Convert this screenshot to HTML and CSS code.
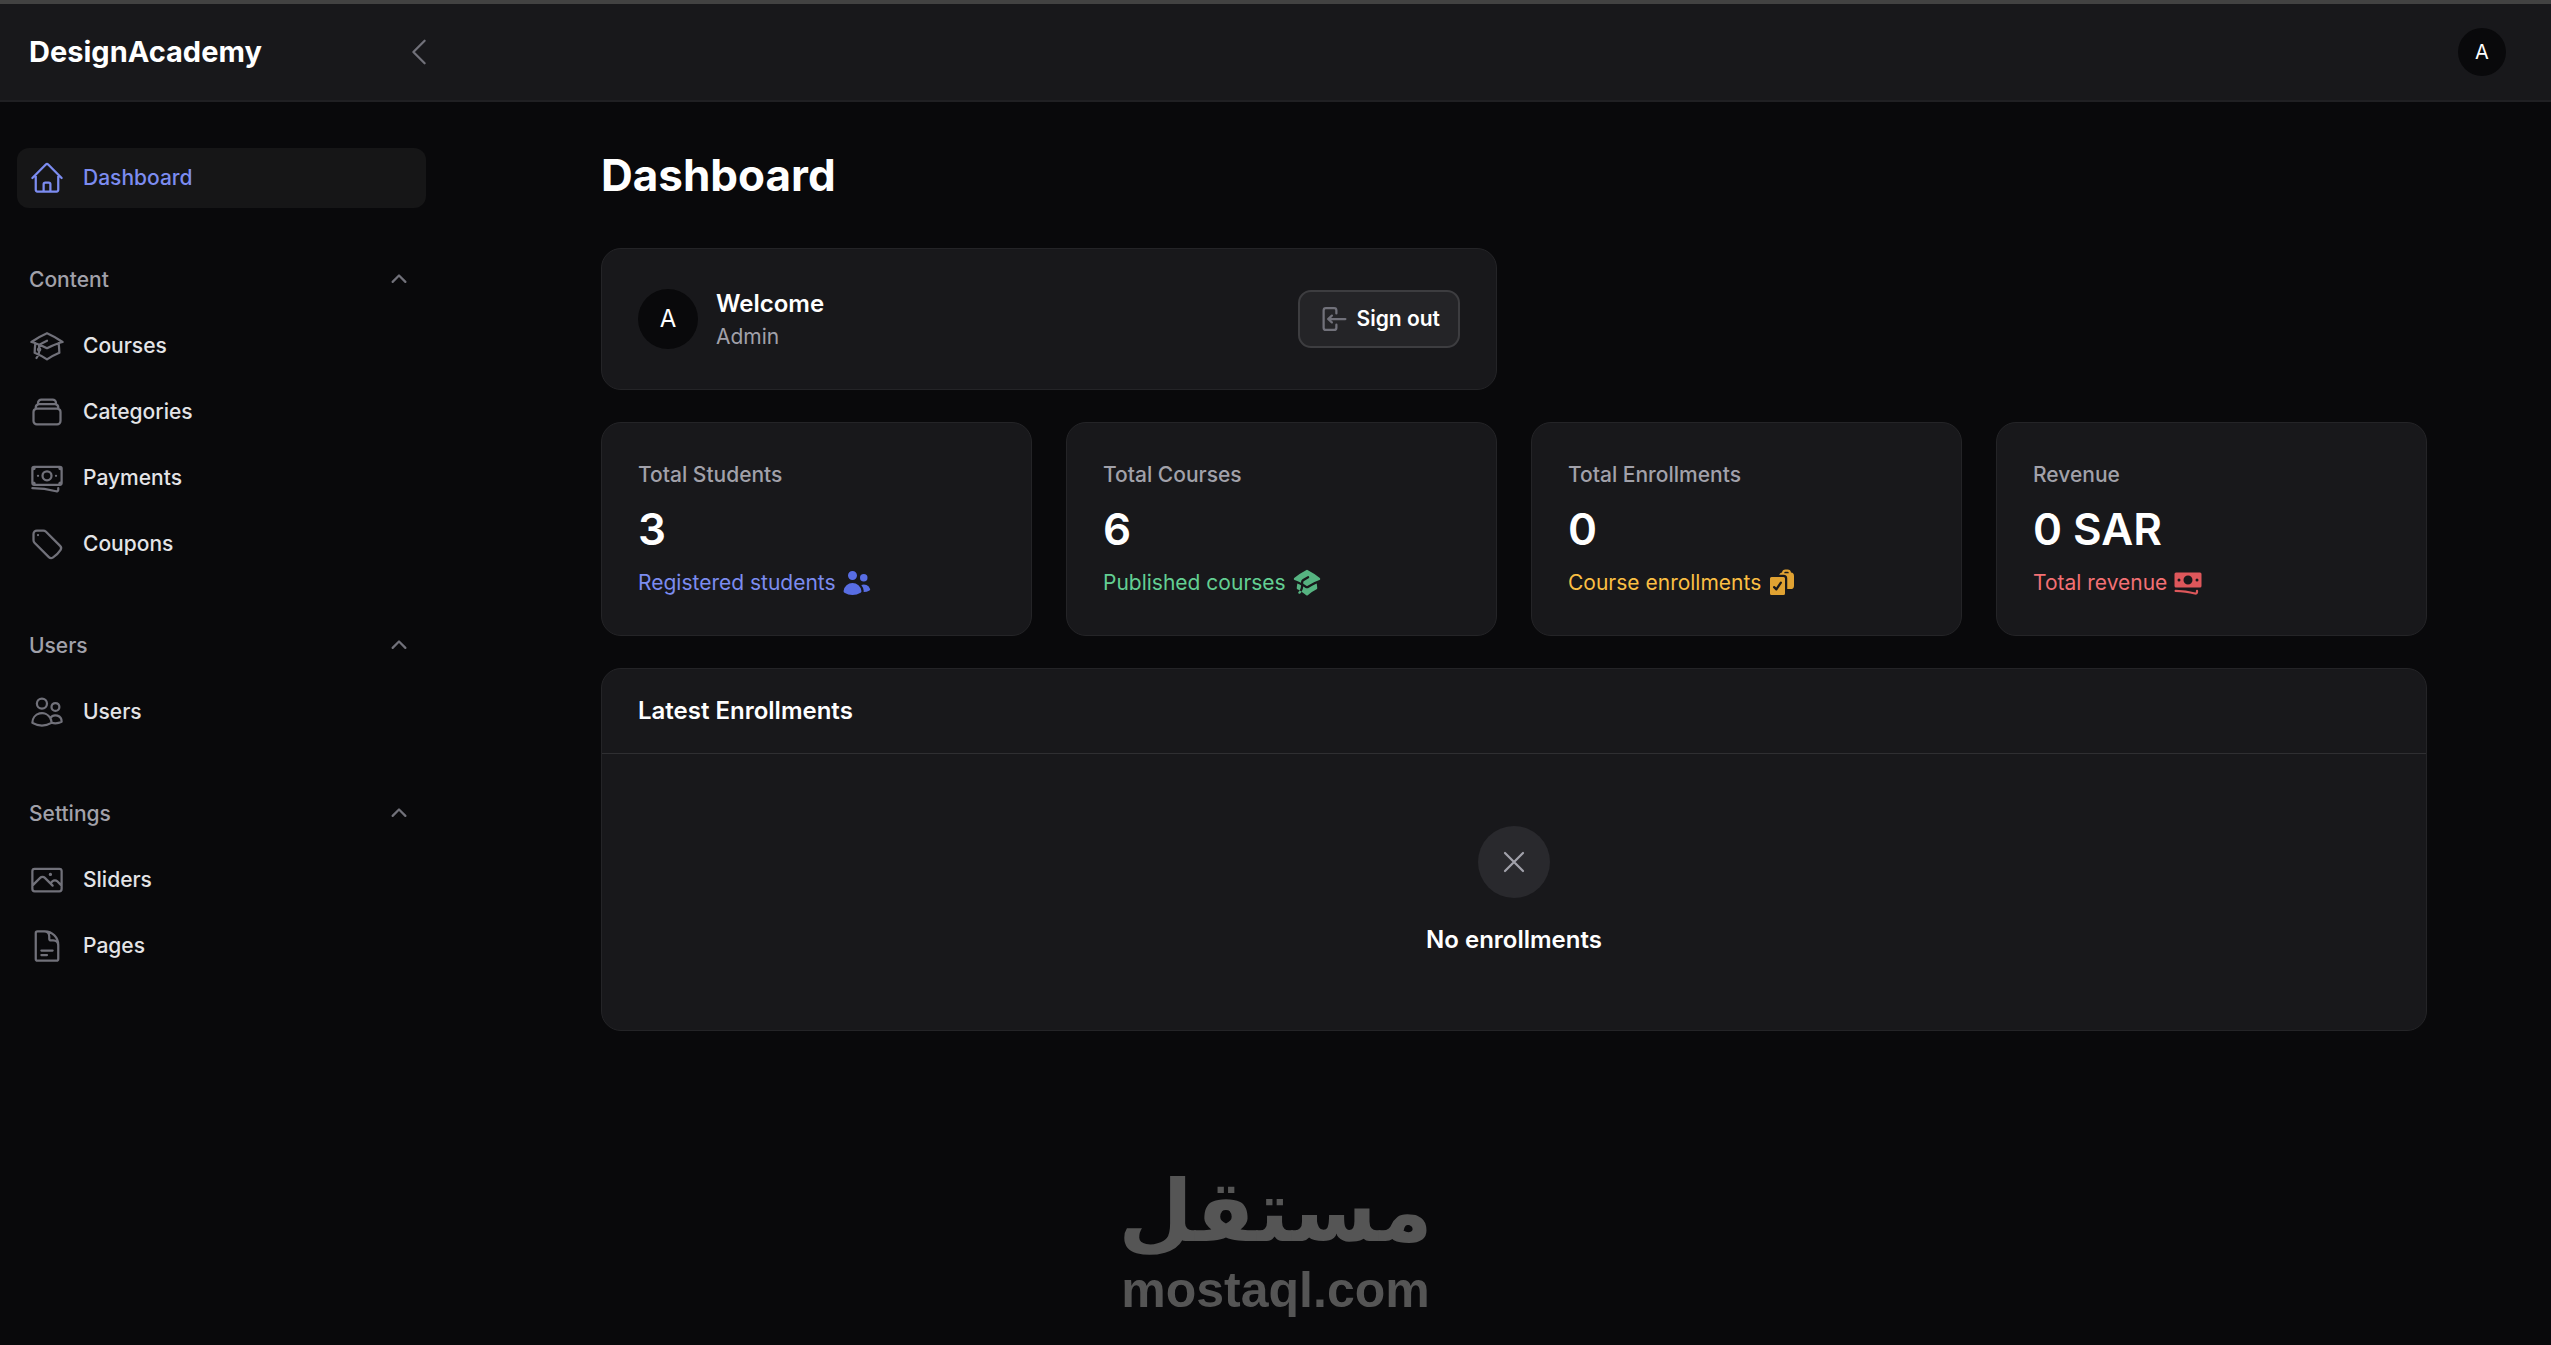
FILE: index.html
```html
<!DOCTYPE html>
<html lang="en">
<head>
    <meta charset="UTF-8">
    <meta name="viewport" content="width=device-width, initial-scale=1.0">
    <title>Dashboard - DesignAcademy</title>
    <link rel="stylesheet" href="styles.css">
</head>
<body>
    <header class="topbar">
        <div class="topbar-brand">
            <a class="brand" href="#">DesignAcademy</a>
            <button type="button" class="icon-btn" aria-label="Collapse sidebar">
                <svg class="icon" viewBox="0 0 24 24"><path d="M15.75 19.5 8.25 12l7.5-7.5"/></svg>
            </button>
        </div>
        <button type="button" class="avatar avatar-sm" aria-label="User menu">A</button>
    </header>

    <div class="layout">
        <nav class="sidebar">
            <ul class="nav-list">
                <li>
                    <a class="nav-item active" href="#">
                        <svg class="icon" viewBox="0 0 24 24"><path d="m2.25 12 8.954-8.955c.44-.439 1.152-.439 1.591 0L21.75 12M4.5 9.75v10.125c0 .621.504 1.125 1.125 1.125H9.75v-4.875c0-.621.504-1.125 1.125-1.125h2.25c.621 0 1.125.504 1.125 1.125V21h4.125c.621 0 1.125-.504 1.125-1.125V9.75M8.25 21h8.25"/></svg>
                        <span>Dashboard</span>
                    </a>
                </li>
            </ul>

            <div class="nav-group">
                <button type="button" class="nav-group-btn">
                    <span>Content</span>
                    <svg class="icon-mini" viewBox="0 0 20 20"><path d="M9.47 6.47a.75.75 0 0 1 1.06 0l4.25 4.25a.75.75 0 1 1-1.06 1.06L10 8.06l-3.72 3.72a.75.75 0 0 1-1.06-1.06l4.25-4.25Z"/></svg>
                </button>
                <ul class="nav-list">
                    <li>
                        <a class="nav-item" href="#">
                            <svg class="icon" viewBox="0 0 24 24"><path d="M4.26 10.147a60.438 60.438 0 0 0-.491 6.347A48.62 48.62 0 0 1 12 20.904a48.62 48.62 0 0 1 8.232-4.41 60.46 60.46 0 0 0-.491-6.347m-15.482 0a50.636 50.636 0 0 0-2.658-.813A59.906 59.906 0 0 1 12 3.493a59.903 59.903 0 0 1 10.399 5.84c-.896.248-1.783.52-2.658.814m-15.482 0A50.717 50.717 0 0 1 12 13.489a50.702 50.702 0 0 1 7.74-3.342M6.75 15a.75.75 0 1 0 0-1.5.75.75 0 0 0 0 1.5Zm0 0v-3.675A55.378 55.378 0 0 1 12 8.443m-7.007 11.55A5.981 5.981 0 0 0 6.75 15.75v-1.5"/></svg>
                            <span>Courses</span>
                        </a>
                    </li>
                    <li>
                        <a class="nav-item" href="#">
                            <svg class="icon" viewBox="0 0 24 24"><path d="M6 6.878V6a2.25 2.25 0 0 1 2.25-2.25h7.5A2.25 2.25 0 0 1 18 6v.878m-12 0c.235-.083.487-.128.75-.128h10.5c.263 0 .515.045.75.128m-12 0A2.25 2.25 0 0 0 4.5 9v.878m13.5-3A2.25 2.25 0 0 1 19.5 9v.878m0 0a2.246 2.246 0 0 0-.75-.128H5.25c-.263 0-.515.045-.75.128m15 0A2.25 2.25 0 0 1 21 12v6a2.25 2.25 0 0 1-2.25 2.25H5.25A2.25 2.25 0 0 1 3 18v-6c0-.98.626-1.813 1.5-2.122"/></svg>
                            <span>Categories</span>
                        </a>
                    </li>
                    <li>
                        <a class="nav-item" href="#">
                            <svg class="icon" viewBox="0 0 24 24"><path d="M2.25 18.75a60.07 60.07 0 0 1 15.797 2.101c.727.198 1.453-.342 1.453-1.096V18.75M3.75 4.5v.75A.75.75 0 0 1 3 6h-.75m0 0v-.375c0-.621.504-1.125 1.125-1.125H20.25M2.25 6v9m18-10.5v.75c0 .414.336.75.75.75h.75m-1.5-1.5h.375c.621 0 1.125.504 1.125 1.125v9.75c0 .621-.504 1.125-1.125 1.125h-.375m1.5-1.5H21a.75.75 0 0 0-.75.75v.75m0 0H3.75m0 0h-.375a1.125 1.125 0 0 1-1.125-1.125V15m1.5 1.5v-.75A.75.75 0 0 0 3 15h-.75M15 10.5a3 3 0 1 1-6 0 3 3 0 0 1 6 0Zm3 0h.008v.008H18V10.5Zm-12 0h.008v.008H6V10.5Z"/></svg>
                            <span>Payments</span>
                        </a>
                    </li>
                    <li>
                        <a class="nav-item" href="#">
                            <svg class="icon" viewBox="0 0 24 24"><path d="M9.568 3H5.25A2.25 2.25 0 0 0 3 5.25v4.318c0 .597.237 1.17.659 1.591l9.581 9.581c.699.699 1.78.872 2.607.33a18.095 18.095 0 0 0 5.223-5.223c.542-.827.369-1.908-.33-2.607L11.16 3.66A2.25 2.25 0 0 0 9.568 3Z"/><path d="M6 6h.008v.008H6V6Z"/></svg>
                            <span>Coupons</span>
                        </a>
                    </li>
                </ul>
            </div>

            <div class="nav-group">
                <button type="button" class="nav-group-btn">
                    <span>Users</span>
                    <svg class="icon-mini" viewBox="0 0 20 20"><path d="M9.47 6.47a.75.75 0 0 1 1.06 0l4.25 4.25a.75.75 0 1 1-1.06 1.06L10 8.06l-3.72 3.72a.75.75 0 0 1-1.06-1.06l4.25-4.25Z"/></svg>
                </button>
                <ul class="nav-list">
                    <li>
                        <a class="nav-item" href="#">
                            <svg class="icon" viewBox="0 0 24 24"><path d="M15 19.128a9.38 9.38 0 0 0 2.625.372 9.337 9.337 0 0 0 4.121-.952 4.125 4.125 0 0 0-7.533-2.493M15 19.128v-.003c0-1.113-.285-2.16-.786-3.07M15 19.128v.106A12.318 12.318 0 0 1 8.624 21c-2.331 0-4.512-.645-6.374-1.766l-.001-.109a6.375 6.375 0 0 1 11.964-3.07M12 6.375a3.375 3.375 0 1 1-6.75 0 3.375 3.375 0 0 1 6.75 0Zm8.25 2.25a2.625 2.625 0 1 1-5.25 0 2.625 2.625 0 0 1 5.25 0Z"/></svg>
                            <span>Users</span>
                        </a>
                    </li>
                </ul>
            </div>

            <div class="nav-group">
                <button type="button" class="nav-group-btn">
                    <span>Settings</span>
                    <svg class="icon-mini" viewBox="0 0 20 20"><path d="M9.47 6.47a.75.75 0 0 1 1.06 0l4.25 4.25a.75.75 0 1 1-1.06 1.06L10 8.06l-3.72 3.72a.75.75 0 0 1-1.06-1.06l4.25-4.25Z"/></svg>
                </button>
                <ul class="nav-list">
                    <li>
                        <a class="nav-item" href="#">
                            <svg class="icon" viewBox="0 0 24 24"><path d="m2.25 15.75 5.159-5.159a2.25 2.25 0 0 1 3.182 0l5.159 5.159m-1.5-1.5 1.409-1.409a2.25 2.25 0 0 1 3.182 0l2.909 2.909m-18 3.75h16.5a1.5 1.5 0 0 0 1.5-1.5V6a1.5 1.5 0 0 0-1.5-1.5H3.75A1.5 1.5 0 0 0 2.25 6v12a1.5 1.5 0 0 0 1.5 1.5Zm10.5-11.25h.008v.008h-.008V8.25Zm.375 0a.375.375 0 1 1-.75 0 .375.375 0 0 1 .75 0Z"/></svg>
                            <span>Sliders</span>
                        </a>
                    </li>
                    <li>
                        <a class="nav-item" href="#">
                            <svg class="icon" viewBox="0 0 24 24"><path d="M19.5 14.25v-2.625a3.375 3.375 0 0 0-3.375-3.375h-1.5A1.125 1.125 0 0 1 13.5 7.125v-1.5a3.375 3.375 0 0 0-3.375-3.375H8.25m0 12.75h7.5m-7.5 3H12M10.5 2.25H5.625c-.621 0-1.125.504-1.125 1.125v17.25c0 .621.504 1.125 1.125 1.125h12.75c.621 0 1.125-.504 1.125-1.125V11.25a9 9 0 0 0-9-9Z"/></svg>
                            <span>Pages</span>
                        </a>
                    </li>
                </ul>
            </div>
        </nav>

        <main class="main">
            <h1>Dashboard</h1>

            <div class="widgets">
                <div class="row">
                    <section class="card account">
                        <div class="avatar">A</div>
                        <div class="account-text">
                            <h2>Welcome</h2>
                            <p>Admin</p>
                        </div>
                        <button type="button" class="btn">
                            <svg class="icon-mini" viewBox="0 0 20 20"><path d="M3 4.25A2.25 2.25 0 0 1 5.25 2h5.5A2.25 2.25 0 0 1 13 4.25v2a.75.75 0 0 1-1.5 0v-2a.75.75 0 0 0-.75-.75h-5.5a.75.75 0 0 0-.75.75v11.5c0 .414.336.75.75.75h5.5a.75.75 0 0 0 .75-.75v-2a.75.75 0 0 1 1.5 0v2A2.25 2.25 0 0 1 10.75 18h-5.5A2.25 2.25 0 0 1 3 15.75V4.25Z"/><path d="M19 10a.75.75 0 0 0-.75-.75H8.704l1.048-.943a.75.75 0 1 0-1.004-1.114l-2.5 2.25a.75.75 0 0 0 0 1.114l2.5 2.25a.75.75 0 1 0 1.004-1.114l-1.048-.943h9.546A.75.75 0 0 0 19 10Z"/></svg>
                            <span>Sign out</span>
                        </button>
                    </section>
                </div>

                <div class="row">
                    <section class="card stat primary">
                        <p class="stat-label">Total Students</p>
                        <p class="stat-value">3</p>
                        <p class="stat-desc">
                            <span>Registered students</span>
                            <svg class="icon-mini" viewBox="0 0 20 20"><path d="M7 8a3 3 0 1 0 0-6 3 3 0 0 0 0 6ZM14.5 9a2.5 2.5 0 1 0 0-5 2.5 2.5 0 0 0 0 5ZM1.615 16.428a1.224 1.224 0 0 1-.569-1.175 6.002 6.002 0 0 1 11.908 0c.058.467-.172.92-.57 1.174A9.953 9.953 0 0 1 7 18a9.953 9.953 0 0 1-5.385-1.572ZM14.5 16h-.106c.07-.297.088-.611.048-.933a7.47 7.47 0 0 0-1.588-3.755 4.502 4.502 0 0 1 5.874 2.636.818.818 0 0 1-.36.98A7.465 7.465 0 0 1 14.5 16Z"/></svg>
                        </p>
                    </section>

                    <section class="card stat success">
                        <p class="stat-label">Total Courses</p>
                        <p class="stat-value">6</p>
                        <p class="stat-desc">
                            <span>Published courses</span>
                            <svg class="icon-mini" viewBox="0 0 20 20"><path fill-rule="evenodd" d="M9.664 1.319a.75.75 0 0 1 .672 0 41.059 41.059 0 0 1 8.198 5.424.75.75 0 0 1-.254 1.285 31.372 31.372 0 0 0-7.86 3.83.75.75 0 0 1-.84 0 31.508 31.508 0 0 0-2.08-1.287V9.394c0-.244.116-.463.302-.592a35.504 35.504 0 0 1 3.305-2.033.75.75 0 0 0-.714-1.319 37 37 0 0 0-3.446 2.12A2.216 2.216 0 0 0 6 9.393v.38a31.293 31.293 0 0 0-4.28-1.746.75.75 0 0 1-.254-1.285 41.059 41.059 0 0 1 8.198-5.424ZM6 11.459a29.848 29.848 0 0 0-2.455-1.158 41.029 41.029 0 0 0-.39 3.114.75.75 0 0 0 .419.74c.528.256 1.046.53 1.554.82-.21.324-.455.63-.739.914a.75.75 0 1 0 1.06 1.06c.37-.369.69-.77.96-1.193a26.61 26.61 0 0 1 3.095 2.348.75.75 0 0 0 .992 0 26.547 26.547 0 0 1 5.93-3.95.75.75 0 0 0 .42-.739 41.053 41.053 0 0 0-.39-3.114 29.925 29.925 0 0 0-5.199 2.801 2.25 2.25 0 0 1-2.514 0c-.41-.275-.826-.541-1.25-.797a6.985 6.985 0 0 1-1.084 3.45 26.503 26.503 0 0 0-1.281-.78A5.487 5.487 0 0 0 6 12v-.54Z"/></svg>
                        </p>
                    </section>

                    <section class="card stat warning">
                        <p class="stat-label">Total Enrollments</p>
                        <p class="stat-value">0</p>
                        <p class="stat-desc">
                            <span>Course enrollments</span>
                            <svg class="icon-mini" viewBox="0 0 20 20"><path fill-rule="evenodd" d="M18 5.25a2.25 2.25 0 0 0-2.012-2.238A2.25 2.25 0 0 0 13.75 1h-1.5a2.25 2.25 0 0 0-2.238 2.012c-.875.092-1.6.686-1.884 1.488H11A2.5 2.5 0 0 1 13.5 7v7h2.25A2.25 2.25 0 0 0 18 11.75v-6.5ZM12.25 2.5a.75.75 0 0 0-.75.75v.25h3v-.25a.75.75 0 0 0-.75-.75h-1.5Z"/><path fill-rule="evenodd" d="M3 6a1 1 0 0 0-1 1v10a1 1 0 0 0 1 1h8a1 1 0 0 0 1-1V7a1 1 0 0 0-1-1H3Zm6.874 4.166a.75.75 0 1 0-1.248-.832l-2.493 3.739-.853-.853a.75.75 0 0 0-1.06 1.06l1.5 1.5a.75.75 0 0 0 1.154-.114l3-4.5Z"/></svg>
                        </p>
                    </section>

                    <section class="card stat danger">
                        <p class="stat-label">Revenue</p>
                        <p class="stat-value">0 SAR</p>
                        <p class="stat-desc">
                            <span>Total revenue</span>
                            <svg class="icon-mini" viewBox="0 0 20 20"><path fill-rule="evenodd" d="M1 4a1 1 0 0 1 1-1h16a1 1 0 0 1 1 1v8a1 1 0 0 1-1 1H2a1 1 0 0 1-1-1V4Zm12 4a3 3 0 1 1-6 0 3 3 0 0 1 6 0ZM4 9a1 1 0 1 0 0-2 1 1 0 0 0 0 2Zm13-1a1 1 0 1 1-2 0 1 1 0 0 1 2 0ZM1.75 14.5a.75.75 0 0 0 0 1.5c4.417 0 8.693.603 12.749 1.73 1.111.309 2.251-.512 2.251-1.696v-.784a.75.75 0 0 0-1.5 0v.784a.272.272 0 0 1-.35.25A49.043 49.043 0 0 0 1.75 14.5Z"/></svg>
                        </p>
                    </section>
                </div>

                <section class="card">
                    <h2 class="table-title">Latest Enrollments</h2>
                    <div class="empty">
                        <div class="empty-icon">
                            <svg class="icon" viewBox="0 0 24 24"><path d="M6 18 18 6M6 6l12 12"/></svg>
                        </div>
                        <h3>No enrollments</h3>
                    </div>
                </section>
            </div>
        </main>
    </div>

    <div class="watermark">
        <span class="watermark-ar" lang="ar" dir="rtl">مستقل</span>
        <span class="watermark-en">mostaql.com</span>
    </div>
</body>
</html>
```
FILE: styles.css
```css
* {
    box-sizing: border-box;
}

body {
    position: relative;
    margin: 0;
    min-height: 100vh;
    background: #09090b;
    color: #ffffff;
    font-family: Inter, 'Liberation Sans', sans-serif;
    font-size: 21px;
    line-height: 30px;
}

h1, h2, h3, p, ul {
    margin: 0;
    padding: 0;
}

ul {
    list-style: none;
}

a {
    color: inherit;
    text-decoration: none;
}

button {
    font: inherit;
    color: inherit;
    border: none;
    background: none;
    padding: 0;
    cursor: pointer;
}

.icon {
    width: 36px;
    height: 36px;
    flex-shrink: 0;
    fill: none;
    stroke: #71717a;
    stroke-width: 1.5;
    stroke-linecap: round;
    stroke-linejoin: round;
}

.icon-mini {
    width: 30px;
    height: 30px;
    flex-shrink: 0;
    fill: #71717a;
}

/* Top bar */
.topbar {
    display: flex;
    align-items: center;
    justify-content: space-between;
    height: 102px;
    padding-right: 45px;
    background: #18181b;
    border-top: 4px solid #424242;
    border-bottom: 2px solid #202023;
}

.topbar-brand {
    display: flex;
    align-items: center;
    justify-content: space-between;
    width: 437px;
    padding-left: 29px;
}

.brand {
    font-size: 29px;
    font-weight: 700;
    line-height: 42px;
}

.icon-btn {
    display: flex;
}

.avatar {
    display: flex;
    align-items: center;
    justify-content: center;
    width: 60px;
    height: 60px;
    border-radius: 50%;
    background: #09090b;
    font-size: 24px;
}

.avatar-sm {
    width: 48px;
    height: 48px;
    font-size: 20px;
}

.layout {
    display: flex;
}

/* Sidebar */
.sidebar {
    display: flex;
    flex-direction: column;
    gap: 42px;
    width: 477px;
    flex-shrink: 0;
    padding: 46px 51px 46px 17px;
}

.nav-list, .nav-group {
    display: flex;
    flex-direction: column;
    gap: 6px;
}

.nav-item {
    display: flex;
    align-items: center;
    gap: 18px;
    padding: 12px;
    border-radius: 12px;
    color: #e4e4e7;
    font-weight: 500;
    line-height: 36px;
}

.nav-item.active {
    background: #161617;
    color: #7c8cf0;
}

.nav-item.active .icon {
    stroke: #7c8cf0;
}

.nav-group-btn {
    display: flex;
    align-items: center;
    justify-content: space-between;
    padding: 12px;
    color: #a1a1aa;
    font-weight: 500;
    line-height: 36px;
}

/* Content */
.main {
    flex: 1;
    padding: 46px 48px;
}

.main h1, .widgets {
    max-width: 1826px;
    margin: 0 auto;
}

.main h1 {
    font-size: 44px;
    font-weight: 700;
    line-height: 54px;
}

.widgets {
    display: flex;
    flex-direction: column;
    gap: 32px;
    padding-top: 46px;
}

.row {
    display: grid;
    grid-template-columns: repeat(4, 1fr);
    gap: 34px;
}

.card {
    background: #18181b;
    border: 1px solid #242427;
    border-radius: 20px;
}

.account {
    grid-column: span 2;
    display: flex;
    align-items: center;
    gap: 18px;
    padding: 37px 36px;
}

.account-text {
    flex: 1;
}

.account-text h2, .table-title, .empty h3 {
    font-size: 24px;
    font-weight: 600;
    line-height: 36px;
}

.account-text p {
    color: #a1a1aa;
}

.btn {
    display: flex;
    align-items: center;
    gap: 9px;
    padding: 12px 18px;
    background: #242427;
    border: 2px solid #3d3d40;
    border-radius: 13px;
    font-weight: 600;
}

.stat {
    display: flex;
    flex-direction: column;
    gap: 12px;
    padding: 37px 36px;
}

.stat-label {
    color: #a1a1aa;
    font-weight: 500;
}

.stat-value {
    font-size: 44px;
    font-weight: 600;
    line-height: 54px;
}

.stat-desc {
    display: flex;
    align-items: center;
    gap: 6px;
}

.primary .stat-desc { color: #7c8cf0; }
.primary .icon-mini { fill: #586de3; }

.success .stat-desc { color: #63cf93; }
.success .icon-mini { fill: #56b381; }

.warning .stat-desc { color: #fbbf43; }
.warning .icon-mini { fill: #e0a232; }

.danger .stat-desc { color: #f37074; }
.danger .icon-mini { fill: #de575b; }

/* Enrollments table */
.table-title {
    padding: 24px 36px;
    border-bottom: 1px solid #2f2f32;
}

.empty {
    display: flex;
    flex-direction: column;
    align-items: center;
    gap: 24px;
    padding: 72px 36px;
}

.empty-icon {
    display: flex;
    align-items: center;
    justify-content: center;
    width: 72px;
    height: 72px;
    border-radius: 50%;
    background: #29292d;
}

.empty-icon .icon {
    stroke: #a1a1aa;
}

/* Watermark laid over the bottom of the page */
.watermark {
    position: absolute;
    left: 0;
    right: 0;
    bottom: 26px;
    display: flex;
    flex-direction: column;
    align-items: center;
    color: #555555;
    font-weight: 700;
    pointer-events: none;
}

.watermark-ar {
    font-family: 'DejaVu Sans', sans-serif;
    font-size: 86px;
    line-height: 100px;
}

.watermark-en {
    font-family: 'Liberation Sans', Arial, sans-serif;
    font-size: 50px;
    line-height: 58px;
}
```
